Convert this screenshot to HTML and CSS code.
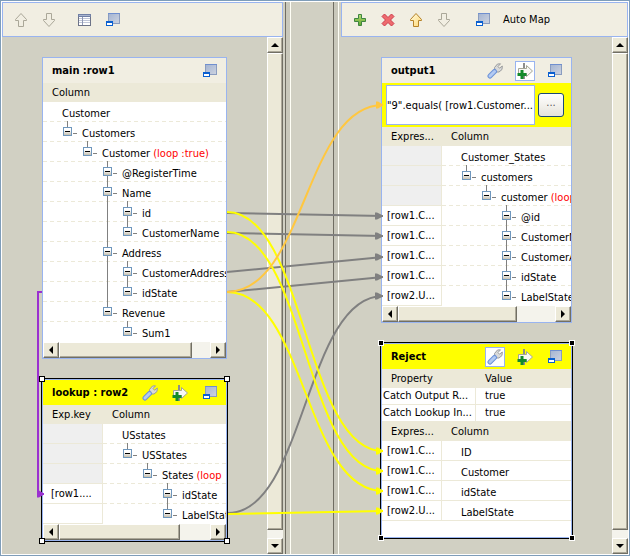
FILE: index.html
```html
<!DOCTYPE html>
<html lang="en">
<head>
<meta charset="utf-8">
<title>Map editor</title>
<link rel="stylesheet" href="styles.css">
</head>
<body>
<svg class="defs" width="0" height="0" aria-hidden="true">
  <defs>
    <linearGradient id="gWin" x1="0" y1="0" x2="1" y2="1"><stop offset="0" stop-color="#a4b4d2"/><stop offset="1" stop-color="#cdd3e0"/></linearGradient>
    <linearGradient id="gPlus" x1="0" y1="0" x2="0" y2="1"><stop offset="0" stop-color="#b7dc74"/><stop offset="1" stop-color="#5fa52e"/></linearGradient>
    <linearGradient id="gOrange" x1="0" y1="0" x2="1" y2="1"><stop offset="0" stop-color="#fffbe0"/><stop offset="1" stop-color="#ffd873"/></linearGradient>
    <symbol id="up" viewBox="0 0 14 16"><path d="M7 1.5 L12.5 7.5 V8.5 H9.5 V14.5 H4.5 V8.5 H1.5 V7.5 Z" stroke-width="1"/></symbol>
    <symbol id="down" viewBox="0 0 14 16"><path d="M7 14.5 L12.5 8.5 V7.5 H9.5 V1.5 H4.5 V7.5 H1.5 V8.5 Z" stroke-width="1"/></symbol>
    <symbol id="grid" viewBox="0 0 14 12"><rect x=".5" y=".5" width="12" height="11" fill="#fff" stroke="#6d7388"/><path d="M0 0H13V3H0Z" fill="#7180a5"/><path d="M1 1.5H12" stroke="#a9b4cf"/><path d="M1 4.5H12M1 6.5H12M1 8.5H12" stroke="#c0c6d8"/><path d="M4.5 3V11" stroke="#8f98b5"/></symbol>
    <symbol id="min" viewBox="0 0 14 14"><rect x="2.5" y=".5" width="11" height="10" fill="url(#gWin)" stroke="#8a9cc0"/><path d="M2 .5H14" stroke="#6f8fd0"/><rect x="0" y="8" width="7" height="5" fill="#0a5fd0"/><rect x="1" y="10" width="5" height="2" fill="#fff"/></symbol>
    <symbol id="wrench" viewBox="0 0 16 16"><path d="M8 8 L7.5 4.5 L10.5 1 L13.5 .8 L11 3.5 L12.5 5.2 L15.300 3 L15 6.5 L12 9 L9.5 9 Z" fill="#d9dada" stroke="#9a9c9e"/><path d="M3 13 L7.5 8.5" stroke="#6c92d8" stroke-width="5" stroke-linecap="round"/><path d="M3 13 L7.500 8.5" stroke="#b3caf2" stroke-width="3" stroke-linecap="round"/></symbol>
    <symbol id="add" viewBox="0 0 18 18"><path d="M8 1V17" stroke="#8d8d8d" stroke-width="2"/><path d="M2.5 6.500 H10.5 V3.5 L16.5 9 L10.5 14.5 V11.5 H2.5 Z" fill="#f8f8f4" stroke="#a5a596"/><path d="M6 8V17M1.500 12.5H10.500" stroke="#138a2b" stroke-width="3"/></symbol>
    <symbol id="plus" viewBox="0 0 14 14"><path d="M5.500 1.500H8.500V5.500H12.500V8.500H8.500V12.500H5.500V8.500H1.500V5.500H5.500Z" fill="url(#gPlus)" stroke="#3e8540"/></symbol>
    <symbol id="cross" viewBox="0 0 14 14"><path d="M3.500 1 L7 4.500 L10.500 1 L13 3.500 L9.500 7 L13 10.500 L10.500 13 L7 9.500 L3.500 13 L1 10.500 L4.500 7 L1 3.500 Z" fill="#ee6a6d" stroke="#cc3b4c"/></symbol>
    <marker id="mGray" markerUnits="userSpaceOnUse" markerWidth="9" markerHeight="8" refX="8" refY="4" orient="0"><path d="M0 0.500H2L8 3.500V4.500L2 7.500H0Z" fill="#808080"/></marker>
    <marker id="mYellow" markerUnits="userSpaceOnUse" markerWidth="9" markerHeight="8" refX="8" refY="4" orient="0"><path d="M1 0.500H3L8 3.500V4.500L3 7.500H1Z" fill="#ff0"/></marker>
    <marker id="mOrange" markerUnits="userSpaceOnUse" markerWidth="9" markerHeight="8" refX="8" refY="4" orient="0"><path d="M1 0.500H3L8 3.500V4.500L3 7.500H1Z" fill="#ffc740"/></marker>
    <marker id="mPurple" markerUnits="userSpaceOnUse" markerWidth="9" markerHeight="8" refX="8" refY="4" orient="0"><path d="M1 0.500H3L8 3.500V4.500L3 7.500H1Z" fill="#9b30d0"/></marker>
  </defs>
</svg>

<main class="editor">
  <section class="pane">
    <div class="toolbar">
      <button class="tool" aria-label="Move up"><svg class="off" width="14" height="16"><use href="#up"/></svg></button>
      <button class="tool" aria-label="Move down"><svg class="off" width="14" height="16"><use href="#down"/></svg></button>
      <span class="sep"></span>
      <button class="tool" aria-label="Columns"><svg width="14" height="12"><use href="#grid"/></svg></button>
      <button class="tool" aria-label="Minimize all"><svg width="14" height="14"><use href="#min"/></svg></button>
    </div>
    <div class="view">
      <div class="canvas">
        <article class="card">
          <header class="head"><h2>main :row1</h2><button class="ico" aria-label="Minimize"><svg width="14" height="14"><use href="#min"/></svg></button></header>
          <div class="clip">
          <table>
            <thead><tr><th>Column</th></tr></thead>
            <tbody>
              <tr><td class="tree l0">Customer</td></tr>
              <tr><td class="tree l1"><button class="tog" aria-label="Collapse"></button>Customers</td></tr>
              <tr><td class="tree l2"><button class="tog" aria-label="Collapse"></button>Customer <em>(loop :true)</em></td></tr>
              <tr><td class="tree l3"><button class="tog" aria-label="Collapse"></button>@RegisterTime</td></tr>
              <tr><td class="tree l3"><button class="tog next" aria-label="Collapse"></button>Name</td></tr>
              <tr><td class="tree l4"><button class="tog" aria-label="Collapse"></button>id</td></tr>
              <tr><td class="tree l4"><button class="tog next" aria-label="Collapse"></button>CustomerName</td></tr>
              <tr><td class="tree l3"><button class="tog far" aria-label="Collapse"></button>Address</td></tr>
              <tr><td class="tree l4"><button class="tog" aria-label="Collapse"></button>CustomerAddress</td></tr>
              <tr><td class="tree l4"><button class="tog next" aria-label="Collapse"></button>idState</td></tr>
              <tr><td class="tree l3"><button class="tog far" aria-label="Collapse"></button>Revenue</td></tr>
              <tr><td class="tree l4"><button class="tog" aria-label="Collapse"></button>Sum1</td></tr>
            </tbody>
          </table>
          </div>
          <div class="hbar"><button class="arr left" aria-label="Scroll left"></button><span class="track"><span class="thumb w88"></span></span><button class="arr right" aria-label="Scroll right"></button></div>
        </article>

        <article class="card picked">
          <header class="head"><h2>lookup : row2</h2>
            <button class="ico" aria-label="Settings"><svg width="16" height="16"><use href="#wrench"/></svg></button>
            <button class="ico" aria-label="Filter"><svg width="18" height="18"><use href="#add"/></svg></button>
            <button class="ico" aria-label="Minimize"><svg width="14" height="14"><use href="#min"/></svg></button></header>
          <div class="clip">
          <table>
            <colgroup><col class="key"><col></colgroup>
            <thead><tr><th>Exp.key</th><th>Column</th></tr></thead>
            <tbody>
              <tr><td class="exp none"></td><td class="tree l0">USstates</td></tr>
              <tr><td class="exp none"></td><td class="tree l1"><button class="tog" aria-label="Collapse"></button>USStates</td></tr>
              <tr><td class="exp none"></td><td class="tree l2"><button class="tog" aria-label="Collapse"></button>States <em>(loop</em></td></tr>
              <tr><td class="exp key-exp">[row1....</td><td class="tree l3"><button class="tog" aria-label="Collapse"></button>idState</td></tr>
              <tr><td class="exp"></td><td class="tree l3"><button class="tog next" aria-label="Collapse"></button>LabelStat</td></tr>
            </tbody>
          </table>
          </div>
          <div class="hbar"><button class="arr left" aria-label="Scroll left"></button><span class="track"><span class="thumb w80"></span></span><button class="arr right" aria-label="Scroll right"></button></div>
          <i class="grip tl"></i><i class="grip tr"></i><i class="grip bl"></i><i class="grip br"></i>
        </article>
      </div>
      <div class="vbar"><button class="arr top" aria-label="Scroll up"></button><span class="track"><span class="thumb"></span></span><button class="arr bottom" aria-label="Scroll down"></button></div>
    </div>
  </section>

  <div class="middle"><div class="sash"></div><div class="sash"></div></div>

  <section class="pane">
    <div class="toolbar">
      <button class="tool" aria-label="Add output"><svg width="14" height="14"><use href="#plus"/></svg></button>
      <button class="tool" aria-label="Remove output"><svg width="14" height="14"><use href="#cross"/></svg></button>
      <button class="tool" aria-label="Move up"><svg class="on" width="14" height="16"><use href="#up"/></svg></button>
      <button class="tool" aria-label="Move down"><svg class="off" width="14" height="16"><use href="#down"/></svg></button>
      <span class="sep wide"></span>
      <button class="tool" aria-label="Minimize all"><svg width="14" height="14"><use href="#min"/></svg></button>
      <button class="auto">Auto Map</button>
    </div>
    <div class="view">
      <div class="canvas">
        <article class="card">
          <header class="head"><h2>output1</h2>
            <button class="ico" aria-label="Settings"><svg width="16" height="16"><use href="#wrench"/></svg></button>
            <button class="ico down" aria-label="Filter"><svg width="18" height="18"><use href="#add"/></svg></button>
            <button class="ico" aria-label="Minimize"><svg width="14" height="14"><use href="#min"/></svg></button></header>
          <div class="filter"><input aria-label="Filter expression" value="&quot;9&quot;.equals( [row1.Customer..."><button class="more" aria-label="Edit expression">...</button></div>
          <div class="clip">
          <table>
            <colgroup><col class="key"><col></colgroup>
            <thead><tr><th>Expres...</th><th>Column</th></tr></thead>
            <tbody>
              <tr><td class="exp none"></td><td class="tree l0">Customer_States</td></tr>
              <tr><td class="exp none"></td><td class="tree l1"><button class="tog" aria-label="Collapse"></button>customers</td></tr>
              <tr><td class="exp none"></td><td class="tree l2"><button class="tog" aria-label="Collapse"></button>customer <em>(loop</em></td></tr>
              <tr><td class="exp">[row1.C...</td><td class="tree l3"><button class="tog" aria-label="Collapse"></button>@id</td></tr>
              <tr><td class="exp">[row1.C...</td><td class="tree l3"><button class="tog next" aria-label="Collapse"></button>CustomerName</td></tr>
              <tr><td class="exp">[row1.C...</td><td class="tree l3"><button class="tog next" aria-label="Collapse"></button>CustomerAddress</td></tr>
              <tr><td class="exp">[row1.C...</td><td class="tree l3"><button class="tog next" aria-label="Collapse"></button>idState</td></tr>
              <tr><td class="exp">[row2.U...</td><td class="tree l3"><button class="tog next" aria-label="Collapse"></button>LabelState</td></tr>
            </tbody>
          </table>
          </div>
          <div class="hbar"><button class="arr left" aria-label="Scroll left"></button><span class="track"><span class="thumb w76"></span></span><button class="arr right" aria-label="Scroll right"></button></div>
        </article>

        <article class="card picked solid">
          <header class="head"><h2>Reject</h2>
            <button class="ico down" aria-label="Settings"><svg width="16" height="16"><use href="#wrench"/></svg></button>
            <button class="ico" aria-label="Filter"><svg width="18" height="18"><use href="#add"/></svg></button>
            <button class="ico" aria-label="Minimize"><svg width="14" height="14"><use href="#min"/></svg></button></header>
          <table>
            <colgroup><col class="prop"><col></colgroup>
            <thead><tr><th>Property</th><th>Value</th></tr></thead>
            <tbody>
              <tr><td class="name">Catch Output R...</td><td class="value">true</td></tr>
              <tr><td class="name">Catch Lookup In...</td><td class="value">true</td></tr>
            </tbody>
          </table>
          <table>
            <colgroup><col class="key"><col></colgroup>
            <thead><tr><th>Expres...</th><th>Column</th></tr></thead>
            <tbody>
              <tr><td class="exp">[row1.C...</td><td class="tree l0 flat">ID</td></tr>
              <tr><td class="exp">[row1.C...</td><td class="tree l0 flat">Customer</td></tr>
              <tr><td class="exp">[row1.C...</td><td class="tree l0 flat">idState</td></tr>
              <tr><td class="exp">[row2.U...</td><td class="tree l0 flat">LabelState</td></tr>
            </tbody>
          </table>
          <div class="blank"></div>
          <i class="grip tl"></i><i class="grip tr"></i><i class="grip bl"></i><i class="grip br"></i>
        </article>
      </div>
      <div class="vbar"><button class="arr top" aria-label="Scroll up"></button><span class="track"><span class="thumb"></span></span><button class="arr bottom" aria-label="Scroll down"></button></div>
    </div>
  </section>
</main>

<svg class="links" width="630" height="556" viewBox="0 0 630 556" fill="none" stroke-width="2" aria-hidden="true">
  <g stroke="#808080">
    <path d="M227 213L383 216" marker-end="url(#mGray)"/>
    <path d="M227 233L383 236" marker-end="url(#mGray)"/>
    <path d="M227 272L383 257" marker-end="url(#mGray)"/>
    <path d="M227 292L383 277" marker-end="url(#mGray)"/>
    <path d="M228 513C305 513 305 296 383 296" marker-end="url(#mGray)"/>
  </g>
  <g stroke="#ff0">
    <path d="M227 212C305 212 305 451 383 451" marker-end="url(#mYellow)"/>
    <path d="M227 232C305 232 305 471 383 471" marker-end="url(#mYellow)"/>
    <path d="M227 292C305 292 305 491 383 491" marker-end="url(#mYellow)"/>
    <path d="M228 514L383 511" marker-end="url(#mYellow)"/>
  </g>
  <path d="M227 292C305 292 305 105 383 105" stroke="#ffc740" marker-end="url(#mOrange)"/>
  <path d="M42 292H38V494H44" stroke="#9b30d0" marker-end="url(#mPurple)"/>
</svg>
</body>
</html>
```
FILE: styles.css
```css
* { box-sizing: border-box; }

body {
  margin: 0;
  font: 11px/20px "DejaVu Sans Condensed", Tahoma, "DejaVu Sans", sans-serif;
  color: #000;
}

button, input { font: inherit; color: inherit; margin: 0; padding: 0; }
button { border: 0; background: none; }
h2 { margin: 0; font-size: 11px; line-height: 25px; }
.defs { position: absolute; }

.editor {
  display: grid;
  grid-template-columns: 281px 58px 1fr;
  min-height: 100vh;
  padding: 1px;
  border: 1px solid #7f9db9;
  background: #d1d0c3;
  box-shadow: inset 0 0 0 1px #fff;
}

.pane { display: flex; flex-direction: column; min-width: 0; }

.toolbar {
  display: flex;
  align-items: center;
  height: 35px;
  padding: 0 4px;
  border: 1px solid #99b4f0;
  background: #f1eee2;
}
.tool { display: flex; align-items: center; justify-content: center; width: 28px; height: 28px; }
.sep { width: 8px; }
.sep.wide { width: 11px; }
.auto { padding-left: 6px; }
.off { fill: #f1eee2; stroke: #aaa798; }
.on { fill: url(#gOrange); stroke: #b5822a; }

.view { display: flex; flex: 1; }
.canvas { display: flex; flex: 1; flex-direction: column; gap: 20px; min-width: 0; padding: 20px 40px 8px; }

.middle { display: flex; justify-content: space-between; padding: 0 2px; }
.sash { width: 6px; border-left: 1px solid #6f6d62; border-right: 1px solid #fffff6; background: #c9c8bb; }

/* Mapping tables */
.card { position: relative; border: 1px solid #99b4f0; background: #fff; }
.head { display: flex; align-items: center; gap: 10px; height: 25px; padding: 0 6px 0 9px; background: #f1eee2; }
.head h2 { flex: 1; white-space: nowrap; }
.ico { display: flex; align-items: center; justify-content: center; width: 20px; height: 20px; }
.ico.down { border: 1px solid #99b4f0; background: #fff; }
.clip { overflow: hidden; }

.picked { box-shadow: 0 0 0 1px #000; }
.picked .head { background: #ff0; }
.grip { position: absolute; width: 6px; height: 6px; border: 1px solid #000; background: #fff; }
.solid .grip { border-color: #fff; background: #000; }
.tl { left: -4px; top: -4px; }
.tr { right: -4px; top: -4px; }
.bl { left: -4px; bottom: -4px; }
.br { right: -4px; bottom: -4px; }

table { width: 100%; table-layout: fixed; border-spacing: 0; }
.key { width: 60px; }
.prop { width: 94px; }
th { height: 19px; padding: 0 0 0 9px; background: #ece9d8; font-weight: normal; line-height: 19px; text-align: left; white-space: nowrap; }
td { position: relative; height: 20px; padding: 0; white-space: nowrap; }
.exp { padding-left: 5px; border-right: 1px solid #ece9d8; border-bottom: 1px solid #ece9d8; line-height: 19px; }
.exp.key-exp { padding-left: 8px; }
.exp.none { background: #efefef; }
.name, .value { height: 17px; border-bottom: 1px solid #ece9d8; line-height: 16px; }
.name { padding-left: 1px; border-right: 1px solid #ece9d8; }
.value { padding-left: 9px; }
.blank { height: 16px; }

/* Tree rows */
.tree {
  padding-top: 4px;
  line-height: 16px;
  background: repeating-linear-gradient(90deg, #ece9d8 0 4px, transparent 4px 7px) bottom / 100% 1px no-repeat;
}
.tree.flat { background: none; border-bottom: 1px solid #ece9d8; line-height: 15px; }
.l0 { padding-left: 19px; }
.l1 { padding-left: 39px; }
.l2 { padding-left: 59px; }
.l3 { padding-left: 79px; }
.l4 { padding-left: 99px; }
tbody tr:last-child .tree:not(.flat) { background: none; }
.tree em { color: #f00; font-style: normal; }

.tog {
  position: absolute;
  top: 5px;
  width: 9px;
  height: 9px;
  margin-left: -19px;
  border: 1px solid #6f97bd;
  background: linear-gradient(#000, #000) center / 5px 1px no-repeat, linear-gradient(#fff 30%, #c6c0b0);
}
.tog::before { content: ""; position: absolute; left: 3px; top: -7px; width: 1px; height: 6px; background: #808080; }
.tog.next::before { top: -12px; height: 11px; }
.tog.far::before { top: -52px; height: 51px; }
.tog::after { content: ""; position: absolute; left: 9px; top: 5px; width: 4px; height: 1px; background: #808080; }

/* Filter row */
.filter { display: flex; align-items: center; gap: 3px; padding: 2px 7px 2px 4px; background: #ff0; }
.filter input { flex: 1; min-width: 0; height: 40px; border: 1px solid #99b4f0; background: #fff; }
.more { width: 26px; height: 24px; padding-bottom: 4px; border: 1px solid #1c4a75; border-radius: 3px; background: linear-gradient(#fff, #e6e3da); color: #555; line-height: 16px; }

/* Scroll bars */
.hbar { display: flex; height: 16px; background: #f4f3ec; }
.vbar { display: flex; flex-direction: column; width: 16px; background: #f4f3ec; }
.track { display: flex; flex: 1; }
.vbar .track { padding-bottom: 8px; }
.thumb, .arr {
  border: 1px solid #fff;
  border-right-color: #716f64;
  border-bottom-color: #716f64;
  background: #ece9d8;
  box-shadow: inset -1px -1px #aca899;
}
.vbar .thumb { flex: 1; }
.w88 { width: 88%; }
.w80 { width: 80%; }
.w76 { width: 76%; }
.arr { display: flex; align-items: center; justify-content: center; width: 16px; height: 16px; }
.arr::before { content: ""; border: 4px solid transparent; }
.arr.left::before { border-left: 0; border-right-color: #000; }
.arr.right::before { border-right: 0; border-left-color: #000; }
.arr.top::before { border-top: 0; border-bottom-color: #000; }
.arr.bottom::before { border-bottom: 0; border-top-color: #000; }

.links { position: absolute; left: 0; top: 0; pointer-events: none; }
```
